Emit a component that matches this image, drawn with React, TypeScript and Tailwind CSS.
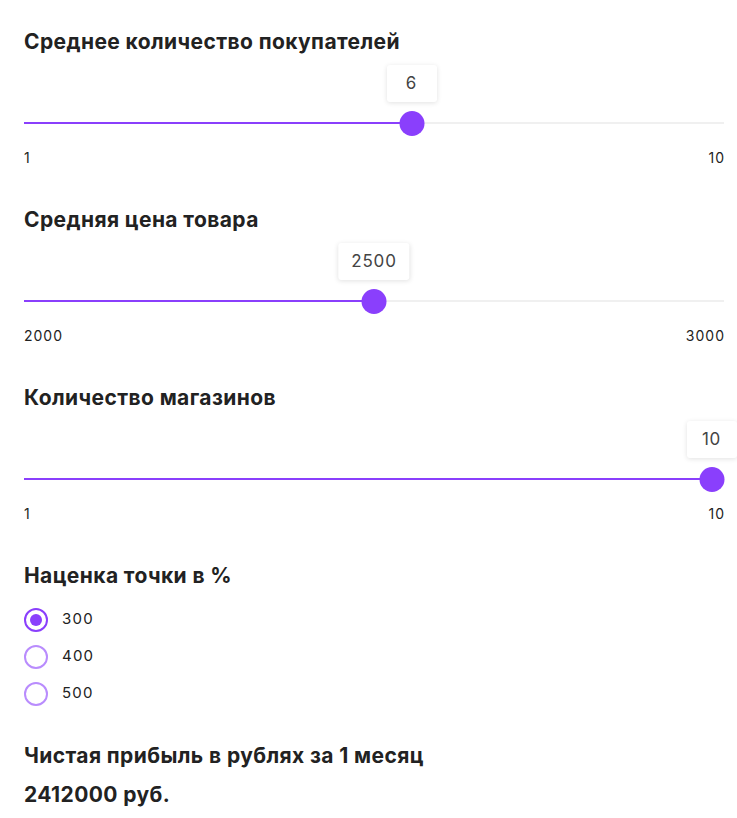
import React from "react";

function Slider({ title, min, max, value }: { title: string; min: number; max: number; value: number }) {
  const frac = (value - min) / (max - min);
  const center = `calc(12.5px + ${frac} * (100% - 25px))`;
  return (
    <div className="flex flex-col">
      <h2 className="text-[21px] leading-[28px] font-bold tracking-[0.4px] text-[#222]">{title}</h2>
      <div className="relative h-[92px]">
        <div className="absolute left-0 right-0 top-[66px] h-[2px] bg-[#f0f0f0]" />
        <div className="absolute left-0 top-[66px] h-[2px] bg-[#8a3ffc]" style={{ width: center }} />
        <div
          className="absolute top-[54.5px] w-[25px] h-[25px] rounded-full bg-[#8a3ffc] -translate-x-1/2"
          style={{ left: center }}
        />
        <div
          className="absolute top-[9px] h-[37px] px-[13px] flex items-center justify-center bg-white rounded-[3px] shadow-[0_1px_5px_rgba(0,0,0,0.12)] text-[17px] tracking-[0.8px] text-[#444] -translate-x-1/2 min-w-[50px]"
          style={{ left: center }}
        >
          {value}
        </div>
      </div>
      <div className="flex justify-between text-[14px] leading-[20px] tracking-[1px] text-[#222]">
        <span>{min}</span>
        <span className="-mr-[1px]">{max}</span>
      </div>
    </div>
  );
}

function Radio({ label, checked }: { label: string; checked?: boolean }) {
  return (
    <div className="flex items-center h-[37px]">
      <div
        className={
          checked
            ? "w-[24px] h-[24px] rounded-full border-2 border-[#8a3ffc] flex items-center justify-center"
            : "w-[24px] h-[24px] rounded-full border-2 border-[#b98cfd]"
        }
      >
        {checked && <div className="w-[12px] h-[12px] rounded-full bg-[#8a3ffc]" />}
      </div>
      <span className="ml-[14px] text-[15px] tracking-[1.2px] text-[#222]">{label}</span>
    </div>
  );
}

export default function App() {
  return (
    <div className="w-[737px] h-[818px] bg-white px-[24px] pt-[28px] pr-[13px]" style={{ fontFamily: "Inter, 'Noto Sans', sans-serif" }}>
      <div className="flex flex-col gap-[38px] w-[700px]">
        <Slider title="Среднее количество покупателей" min={1} max={10} value={6} />
        <Slider title="Средняя цена товара" min={2000} max={3000} value={2500} />
        <Slider title="Количество магазинов" min={1} max={10} value={10} />
      </div>
      <div className="mt-[38px] flex flex-col">
        <h2 className="text-[21px] leading-[28px] font-bold tracking-[0.4px] text-[#222]">Наценка точки в %</h2>
        <div className="mt-[11px] flex flex-col">
          <Radio label="300" checked />
          <Radio label="400" />
          <Radio label="500" />
        </div>
      </div>
      <div className="mt-[30px] flex flex-col gap-[11px]">
        <h2 className="text-[21px] leading-[28px] font-bold tracking-[0.4px] text-[#222]">Чистая прибыль в рублях за 1 месяц</h2>
        <div className="text-[21px] leading-[28px] font-bold tracking-[0.4px] text-[#222]">2412000 руб.</div>
      </div>
    </div>
  );
}
